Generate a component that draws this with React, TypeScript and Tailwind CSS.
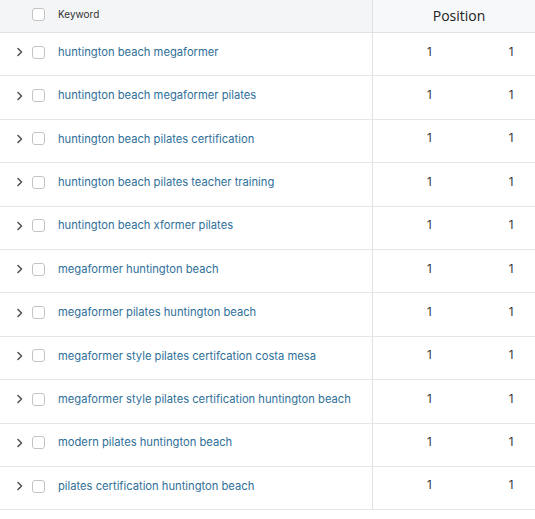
import React from "react";

const rows = [
  "huntington beach megaformer",
  "huntington beach megaformer pilates",
  "huntington beach pilates certification",
  "huntington beach pilates teacher training",
  "huntington beach xformer pilates",
  "megaformer huntington beach",
  "megaformer pilates huntington beach",
  "megaformer style pilates certifcation costa mesa",
  "megaformer style pilates certification huntington beach",
  "modern pilates huntington beach",
  "pilates certification huntington beach",
];

function Chevron() {
  return (
    <svg width="8" height="10" viewBox="0 0 8 10" className="shrink-0">
      <path d="M2 1.5 L5.5 5 L2 8.5" fill="none" stroke="#555" strokeWidth="1.6" strokeLinecap="round" strokeLinejoin="round" />
    </svg>
  );
}

function Box() {
  return <div className="w-[13px] h-[13px] rounded-[3px] border border-[#c4c4c4] bg-white shrink-0" />;
}

export default function App() {
  return (
    <div className="w-[535px] h-[519px] bg-white overflow-hidden" style={{ fontFamily: "'Open Sans', 'Liberation Sans', sans-serif" }}>
      <div className="flex h-[33px] bg-[#f4f5f7] border-b border-[#e2e2e2]">
        <div className="w-[373px] border-r border-[#e2e2e2] flex items-center pl-[32px] pb-[4px]">
          <Box />
          <span className="ml-[13px] text-[10px] text-[#333]" style={{ fontFamily: "Inter, sans-serif" }}>Keyword</span>
        </div>
        <div className="flex-1 flex items-center justify-center pl-[10px] pb-[1px] bg-[#f7f8f9]">
          <span className="text-[14px] text-[#222]">Position</span>
        </div>
      </div>
      {rows.map((r, i) => (
        <div key={i} className="flex h-[43.4px] border-b border-[#e6e6e6]">
          <div className="w-[373px] border-r border-[#e2e2e2] flex items-center pl-[16px] pb-[4px]">
            <Chevron />
            <div className="ml-[8px]"><Box /></div>
            <span className="ml-[13px] text-[11.2px] text-[#2f6f99]" style={{ fontFamily: "Inter, sans-serif" }}>{r}</span>
          </div>
          <div className="flex-1 flex items-center pb-[4px] text-[11.5px] text-[#333]" style={{ fontFamily: "Inter, sans-serif" }}>
            <span className="ml-[54px]">1</span>
            <span className="ml-[77px]">1</span>
          </div>
        </div>
      ))}
    </div>
  );
}
